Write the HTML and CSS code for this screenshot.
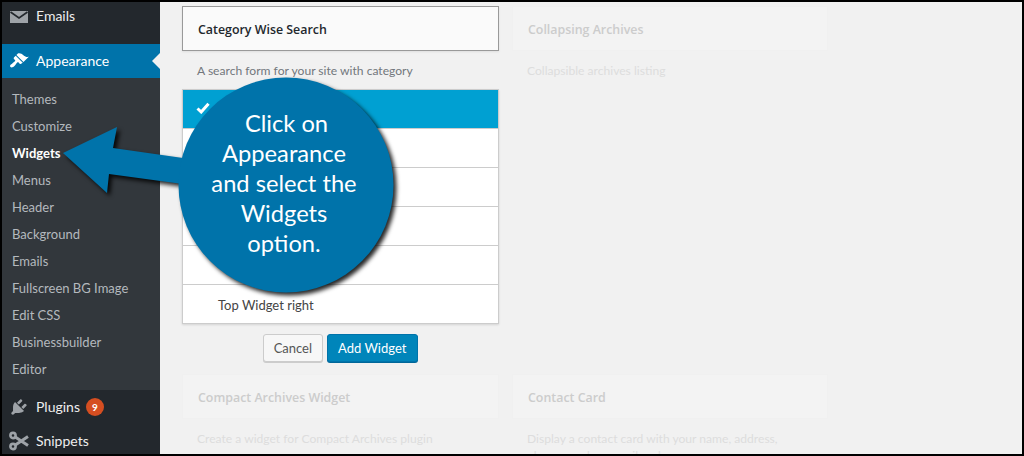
FILE: index.html
```html
<!DOCTYPE html>
<html lang="en">
<head>
<meta charset="utf-8">
<title>Widgets</title>
<link rel="stylesheet" href="styles.css">
</head>
<body>
<div class="frame">
  <nav class="sidebar">
    <div class="menu-item emails">
      <svg class="icon" viewBox="0 0 18 12" width="18" height="12"><rect width="18" height="12" fill="#9ea3a8"/><path d="M0.5 1 L9 7 L17.5 1" fill="none" stroke="#23282d" stroke-width="1.6"/></svg>
      <span>Emails</span>
    </div>
    <div class="menu-item current">
      <svg class="icon" viewBox="0 0 20 20" width="20" height="20"><path fill="#fff" d="M14.48 11.06L7.41 3.99l1.5-1.5c.5-.56 2.3-.47 3.51.32 1.21.8 1.43 1.28 2.91 2.1 1.18.64 2.45 1.26 4.45.85zm-.71.71L6.7 4.7 4.93 6.47c-.39.39-.39 1.02 0 1.41l1.06 1.06c.39.39.39 1.03 0 1.42-.6.6-1.43 1.11-2.21 1.69-.35.26-.7.53-1.01.84C1.43 13.23.4 14.96 1.5 16.06s2.83.07 4.17-1.27c.31-.31.58-.66.84-1.01.58-.78 1.09-1.61 1.69-2.21.39-.39 1.03-.39 1.42 0l1.06 1.06c.39.39 1.02.39 1.41 0z"/></svg>
      <span>Appearance</span>
    </div>
    <ul class="submenu">
      <li>Themes</li>
      <li>Customize</li>
      <li class="active">Widgets</li>
      <li>Menus</li>
      <li>Header</li>
      <li>Background</li>
      <li>Emails</li>
      <li>Fullscreen BG Image</li>
      <li>Edit CSS</li>
      <li>Businessbuilder</li>
      <li>Editor</li>
    </ul>
    <div class="menu-item">
      <svg class="icon" viewBox="0 0 20 20" width="20" height="20"><path fill="#9ea3a8" d="M13.11 4.36L9.87 7.6 8 5.73l3.24-3.24c.35-.34 1.05-.2 1.56.32.52.51.66 1.21.31 1.55zm-8 1.77l.91-1.12 9.01 9.01-1.19.84c-.71.71-2.63 1.16-3.82 1.16H6.14L4.9 17.26c-.59.59-1.54.59-2.12 0-.59-.58-.59-1.53 0-2.12l1.24-1.24v-3.88c0-1.13.4-3.19 1.09-3.89zm7.26 3.97l3.24-3.24c.34-.35 1.04-.21 1.55.31.52.51.66 1.21.31 1.55l-3.24 3.25z"/></svg>
      <span>Plugins</span><span class="badge">9</span>
    </div>
    <div class="menu-item">
      <svg class="icon" viewBox="0 0 20 20" width="20" height="20"><g fill="none" stroke="#9ea3a8"><circle cx="4" cy="4.5" r="2.6" stroke-width="2.6"/><circle cx="4" cy="15.5" r="2.6" stroke-width="2.6"/><path d="M6.3 6 L19 14.5 M6.3 14 L19 5.5" stroke-width="3"/></g></svg>
      <span>Snippets</span>
    </div>
  </nav>

  <main class="content">
    <section class="widget">
      <h3 class="widget-title open">Category Wise Search</h3>
      <p class="desc">A search form for your site with category</p>
      <ul class="areas">
        <li class="selected"><svg class="check" viewBox="0 0 14 12" width="14" height="12"><path d="M1.5 6.5 L5.2 10 L12.5 1.8" fill="none" stroke="#fff" stroke-width="3"/></svg></li>
        <li></li>
        <li></li>
        <li></li>
        <li></li>
        <li>Top Widget right</li>
      </ul>
      <div class="actions">
        <button class="btn">Cancel</button>
        <button class="btn primary">Add Widget</button>
      </div>
    </section>
    <section class="widget faded">
      <h3 class="widget-title">Collapsing Archives</h3>
      <p class="desc">Collapsible archives listing</p>
    </section>
    <section class="widget faded">
      <h3 class="widget-title">Compact Archives Widget</h3>
      <p class="desc">Create a widget for Compact Archives plugin</p>
    </section>
    <section class="widget faded">
      <h3 class="widget-title">Contact Card</h3>
      <p class="desc">Display a contact card with your name, address,<br>phone number, email and more</p>
    </section>
  </main>

  <aside class="callout">
    <svg class="callout-shape" viewBox="60 70 345 235" width="345" height="235">
      <path fill="#0073aa" d="M63 153 L117 127 L113 148 L190 159 L190 185 L109 174 L107 193 Z"/>
      <circle cx="286" cy="185" r="107.5" fill="#0073aa"/>
    </svg>
    <p class="callout-text"><span class="first-line">Click on</span><br>Appearance<br>and select the<br>Widgets<br>option.</p>
  </aside>
</div>
</body>
</html>
```

FILE: styles.css
```css
* { box-sizing: border-box; }
html, body { margin: 0; padding: 0; height: 100%; background: #000; overflow: hidden; }
body { font-family: "Lato", "Open Sans", sans-serif; font-size: 13px; color: #444; }

.frame {
  position: relative;
  display: flex;
  width: 1020px;
  height: 452px;
  margin: 2px;
  background: #f1f1f1;
  overflow: hidden;
}

.sidebar { flex: none; width: 158px; background: #23282d; color: #eee; }

.menu-item {
  position: relative;
  display: flex;
  align-items: center;
  height: 34px;
  padding-bottom: 2px;
  font-size: 14px;
  color: #eee;
}
.menu-item .icon { position: absolute; left: 7px; top: 7px; }
.menu-item span:first-of-type { margin-left: 34px; }

.emails { height: 29px; margin-bottom: 13px; }
.emails .icon { left: 8px; top: 9px; }

.current { background: #0073aa; color: #fff; }
.current::after {
  content: "";
  position: absolute;
  right: 0;
  top: 50%;
  margin-top: -8px;
  border: 8px solid transparent;
  border-right-color: #f1f1f1;
  border-left-width: 0;
}

.submenu {
  list-style: none;
  margin: 0;
  padding: 8px 0 7px;
  background: #32373c;
  color: #b4b9be;
}
.submenu li { height: 27px; line-height: 27px; padding-left: 10px; font-size: 13px; }
.submenu .active { color: #fff; font-weight: 700; }

.badge {
  width: 18px;
  height: 18px;
  margin-top: 2px;
  margin-left: 6px;
  border-radius: 50%;
  background: #d54e21;
  color: #fff;
  font-size: 10px;
  font-weight: 700;
  line-height: 18px;
  text-align: center;
}

.content {
  flex: none;
  display: grid;
  grid-template-columns: 317px 316px;
  grid-auto-rows: min-content;
  column-gap: 13px;
  row-gap: 12px;
  padding: 4px 0 0 22px;
}

.widget-title {
  height: 45px;
  margin: 0;
  padding-left: 15px;
  border: 1px solid #999;
  background: #fafafa;
  color: #23282d;
  font-family: "Open Sans", sans-serif;
  font-size: 12.4px;
  font-weight: 600;
  line-height: 45px;
  box-shadow: 0 1px 2px rgba(0, 0, 0, .08);
}
.desc {
  margin: 11px 0 0;
  padding-left: 15px;
  font-size: 12.1px;
  line-height: 17px;
  color: #72777c;
}

.areas {
  list-style: none;
  margin: 10px 0 0;
  padding: 0;
  border: 1px solid #ccc;
  background: #fff;
  box-shadow: 0 1px 2px rgba(0, 0, 0, .12);
}
.areas li {
  position: relative;
  height: 39px;
  padding-left: 35px;
  font-size: 13px;
  line-height: 40px;
  color: #444;
  border-bottom: 1px solid #ccc;
}
.areas li:last-child { border-bottom: 0; height: 38px; }
.areas .selected { background: #00a0d2; }
.check { position: absolute; left: 13px; top: 12px; }

.actions { display: flex; justify-content: center; gap: 4px; margin-top: 10px; }
.btn {
  height: 28px;
  padding: 0 9.5px;
  border: 1px solid #ccc;
  border-radius: 3px;
  background: #f7f7f7;
  box-shadow: 0 1px 0 #ccc;
  color: #555;
  font-family: inherit;
  font-size: 13px;
}
.primary {
  padding: 0 10.5px;
  border-color: #0073aa;
  background: #0085ba;
  box-shadow: 0 1px 0 #006799;
  color: #fff;
}

.faded .widget-title {
  border-color: #f0f0f0;
  background: #f3f3f3;
  color: #ccc;
  box-shadow: none;
}
.faded .desc { color: #ddd; }

.callout { position: absolute; left: 58px; top: 68px; width: 345px; height: 235px; }
.callout-shape {
  display: block;
  overflow: visible;
  filter: drop-shadow(3px 3px 2px rgba(0, 0, 0, .85));
}
.callout-text {
  position: absolute;
  left: 114px;
  top: 38px;
  width: 220px;
  margin: 0;
  color: #fff;
  font-size: 23.7px;
  line-height: 30px;
  text-align: center;
}
.first-line { margin-left: 5px; }
```
